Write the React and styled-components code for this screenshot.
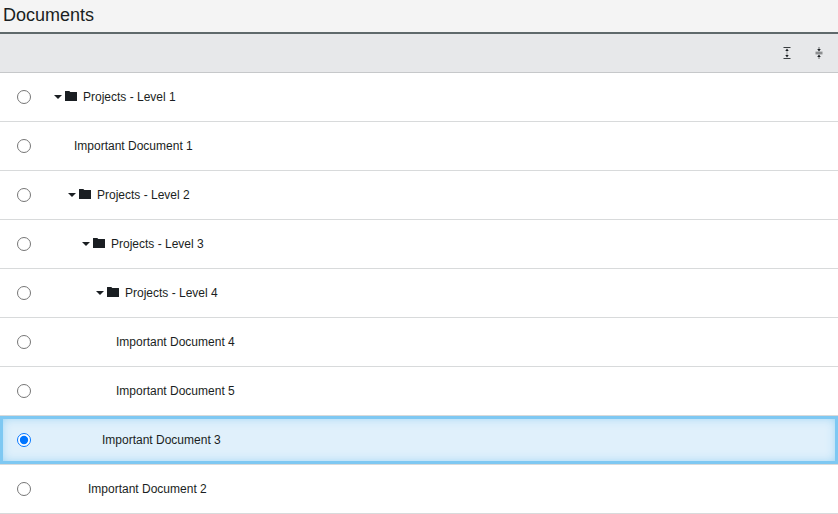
import React, { useState } from "react";
import styled, { createGlobalStyle } from "styled-components";

const GlobalStyle = createGlobalStyle`
  *, *::before, *::after { box-sizing: border-box; }
  body {
    margin: 0;
    background: #fff;
    color: #1a1e22;
    font: 12px/16px "Liberation Sans", Arial, sans-serif;
    overflow: hidden;
  }
`;

const Header = styled.header`
  height: 34px;
  padding-left: 3px;
  background: #f4f4f4;
  border-bottom: 2px solid #5f696b;
`;

const Title = styled.h1`
  margin: 0;
  font-size: 18px;
  font-weight: 400;
  line-height: 30px;
`;

const Toolbar = styled.div`
  display: flex;
  justify-content: flex-end;
  align-items: center;
  gap: 16px;
  height: 39px;
  padding-right: 11px;
  background: #e7e8ea;
  border-bottom: 1px solid #c6c8ca;
`;

const ToolButton = styled.button`
  display: block;
  width: 16px;
  height: 16px;
  padding: 0;
  border: 0;
  background: none;
  color: #1a1e22;

  svg { display: block; }
`;

const Tree = styled.div``;

const Row = styled.label`
  display: flex;
  align-items: center;
  height: 49px;
  padding-left: 17px;
  border-bottom: 1px solid #d8dadb;
  background: ${(p) => (p.$selected ? "#e0f0fb" : "#fff")};
  box-shadow: ${(p) =>
    p.$selected ? "inset 0 0 0 3px #7ec8f2, inset 0 0 12px #7ec8f2" : "none"};
`;

const Radio = styled.input`
  flex: none;
  width: 14px;
  height: 14px;
  margin: 0;
`;

const Node = styled.span`
  display: flex;
  align-items: center;
  padding-left: ${(p) => 23 + p.$depth * 14 + (p.$leaf ? 6 : 0)}px;
`;

const Caret = styled.span`
  width: 8px;
  height: 4px;
  margin-right: 3px;
  background: #1a1e22;
  clip-path: polygon(0 0, 100% 0, 50% 100%);
`;

const FolderSvg = styled.svg`
  width: 12px;
  height: 10px;
  margin: 0 6px 2px 0;
  fill: #1a1e22;
`;

const ExpandIcon = () => (
  <svg width="16" height="16" viewBox="0 0 16 16" fill="currentColor">
    <path d="M4.5 2h7v1h-7zM4.5 13h7v1h-7z" opacity=".85" />
    <path d="M7.5 5h1v6h-1z" opacity=".35" />
    <path d="M8 3.5 9.7 6H6.3zM8 12.5 6.3 10h3.4z" />
  </svg>
);

const CollapseIcon = () => (
  <svg width="16" height="16" viewBox="0 0 16 16" fill="currentColor">
    <path d="M4.5 6.6h7v2.8h-7z" opacity=".45" />
    <path d="M7.5 2h1v3h-1zM7.5 11h1v3h-1z" opacity=".6" />
    <path d="M6.2 4h3.6L8 6.4zM6.2 12h3.6L8 9.6z" />
  </svg>
);

const FolderIcon = () => (
  <FolderSvg viewBox="0 0 12 10">
    <path d="M.3 0H4.3L5.3 1H11.7Q12 1 12 1.3V9.7Q12 10 11.7 10H.3Q0 10 0 9.7V.3Q0 0 .3 0Z" />
  </FolderSvg>
);

const items = [
  { name: "Projects - Level 1", depth: 0, folder: true },
  { name: "Important Document 1", depth: 1 },
  { name: "Projects - Level 2", depth: 1, folder: true },
  { name: "Projects - Level 3", depth: 2, folder: true },
  { name: "Projects - Level 4", depth: 3, folder: true },
  { name: "Important Document 4", depth: 4 },
  { name: "Important Document 5", depth: 4 },
  { name: "Important Document 3", depth: 3 },
  { name: "Important Document 2", depth: 2 },
];

export default function App() {
  const [selected, setSelected] = useState("Important Document 3");
  return (
    <>
      <GlobalStyle />
      <Header>
        <Title>Documents</Title>
      </Header>
      <Toolbar>
        <ToolButton aria-label="Expand all"><ExpandIcon /></ToolButton>
        <ToolButton aria-label="Collapse all"><CollapseIcon /></ToolButton>
      </Toolbar>
      <Tree>
        {items.map(({ name, depth, folder }) => (
          <Row key={name} $selected={name === selected}>
            <Radio
              type="radio"
              name="document"
              checked={name === selected}
              onChange={() => setSelected(name)}
            />
            <Node $depth={depth} $leaf={!folder}>
              {folder && <Caret />}
              {folder && <FolderIcon />}
              {name}
            </Node>
          </Row>
        ))}
      </Tree>
    </>
  );
}
